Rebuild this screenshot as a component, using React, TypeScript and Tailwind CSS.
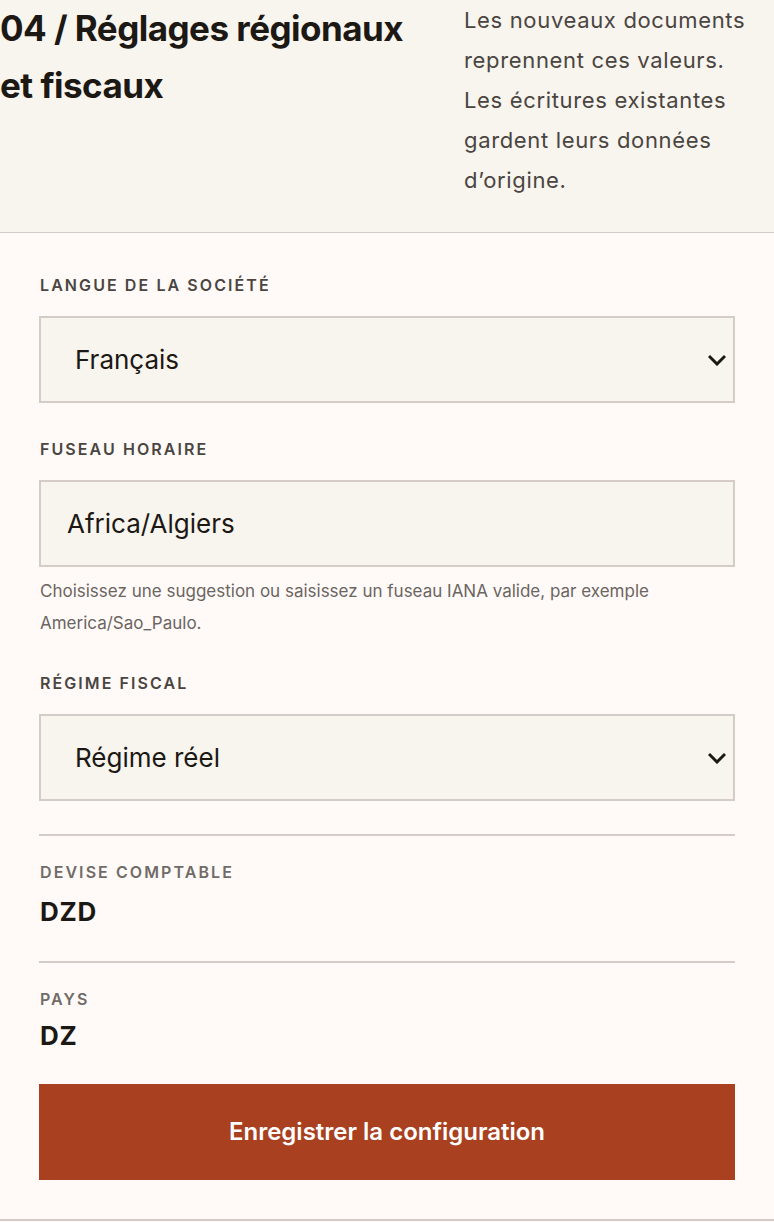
import React, { useState } from 'react';

const font = { fontFamily: 'Inter, "Liberation Sans", sans-serif' };

const Chevron = () => (
  <svg width="18" height="12" viewBox="0 0 18 12" className="pointer-events-none absolute right-[9px] top-1/2 -translate-y-1/2">
    <path d="M2 3l7 7 7-7" fill="none" stroke="#1c1814" strokeWidth="3" strokeLinecap="square" />
  </svg>
);

const Label: React.FC<{ children: React.ReactNode; muted?: boolean }> = ({ children, muted }) => (
  <div
    className={`h-6 text-[16px] leading-6 font-semibold uppercase tracking-[0.13em] ${muted ? 'text-[#716b67]' : 'text-[#4a4541]'}`}
  >
    {children}
  </div>
);

const App: React.FC = () => {
  const [lang, setLang] = useState('fr');
  const [tz, setTz] = useState('Africa/Algiers');
  const [regime, setRegime] = useState('reel');

  return (
    <div className="min-h-[1222px] w-[774px] bg-[#fffaf8] text-[#1c1814]" style={font}>
      <div className="flex border-b border-[#d6ccc7] bg-[#f8f4ee] pb-8">
        <h2 className="w-[464px] shrink-0 pr-8 text-[35px] font-bold leading-[57px] tracking-[-0.015em] text-[#1c1814]">
          04 / Réglages régionaux et fiscaux
        </h2>
        <p className="w-[300px] text-[22px] leading-[40px] tracking-[0.03em] text-[#4a4541]">
          Les nouveaux documents reprennent ces valeurs. Les écritures existantes gardent leurs données d’origine.
        </p>
      </div>

      <div className="border-b-2 border-[#d6ccc7] pl-[39px] pr-[39px] pt-10 pb-[39px]">
        <div className="pl-px">
          <Label>Langue de la société</Label>
        </div>
        <div className="relative mt-[19px]">
          <select
            value={lang}
            onChange={(e) => setLang(e.target.value)}
            className="h-[87px] w-full appearance-none border-2 border-[#d6ccc7] bg-[#f8f4ee] pl-[34px] text-[26px] text-[#1c1814] outline-none"
          >
            <option value="fr">Français</option>
            <option value="en">English</option>
          </select>
          <Chevron />
        </div>

        <div className="mt-[34px] pl-px">
          <Label>Fuseau horaire</Label>
        </div>
        <input
          value={tz}
          onChange={(e) => setTz(e.target.value)}
          className="mt-[19px] block h-[87px] w-full border-2 border-[#d6ccc7] bg-[#f8f4ee] px-[26px] text-[26px] text-[#1c1814] outline-none"
        />
        <p className="mt-[8px] pl-px text-[17px] leading-8 text-[#6b6561]">
          Choisissez une suggestion ou saisissez un fuseau IANA valide, par exemple America/Sao_Paulo.
        </p>

        <div className="mt-8 pl-px">
          <Label>Régime fiscal</Label>
        </div>
        <div className="relative mt-[19px]">
          <select
            value={regime}
            onChange={(e) => setRegime(e.target.value)}
            className="h-[87px] w-full appearance-none border-2 border-[#d6ccc7] bg-[#f8f4ee] pl-[34px] text-[26px] text-[#1c1814] outline-none"
          >
            <option value="reel">Régime réel</option>
            <option value="simplifie">Régime simplifié</option>
          </select>
          <Chevron />
        </div>

        <div className="mt-[33px] border-t-2 border-[#d6ccc7] pl-px pt-6">
          <Label muted>Devise comptable</Label>
          <div className="mt-3 h-8 text-[26px] font-bold leading-8 tracking-[0.03em]">DZD</div>
        </div>

        <div className="mt-[33px] border-t-2 border-[#d6ccc7] pl-px pt-6">
          <Label muted>Pays</Label>
          <div className="mt-[9px] h-8 text-[26px] font-bold leading-8 tracking-[0.03em]">DZ</div>
        </div>

        <button className="mt-8 h-[96px] w-full bg-[#a9401f] text-[24px] font-semibold text-white">
          Enregistrer la configuration
        </button>
      </div>
    </div>
  );
};

export default App;
